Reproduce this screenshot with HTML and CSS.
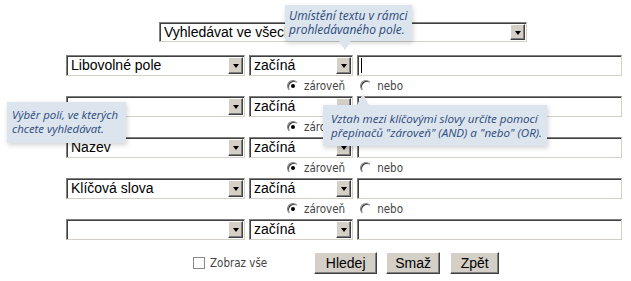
FILE: index.html
```html
<!DOCTYPE html>
<html lang="cs">
<head>
<meta charset="utf-8">
<link rel="stylesheet" href="styles.css">
</head>
<body>
<div class="page">
  <div class="top-row">
    <div class="sel wide"><span class="val">Vyhledávat ve všech</span><span class="btn"><i></i></span></div>
  </div>
  <div class="rows">
    <div class="row">
      <div class="sel field"><span class="val">Libovolné pole</span><span class="btn"><i></i></span></div>
      <div class="sel op"><span class="val">začíná</span><span class="btn"><i></i></span></div>
      <div class="inp"><span class="caret"></span></div>
    </div>
    <div class="conj">
      <span class="radio on"></span><span class="lbl">zároveň</span>
      <span class="radio"></span><span class="lbl">nebo</span>
    </div>
    <div class="row">
      <div class="sel field"><span class="val"></span><span class="btn"><i></i></span></div>
      <div class="sel op"><span class="val">začíná</span><span class="btn"><i></i></span></div>
      <div class="inp"></div>
    </div>
    <div class="conj">
      <span class="radio on"></span><span class="lbl">zároveň</span>
      <span class="radio"></span><span class="lbl">nebo</span>
    </div>
    <div class="row">
      <div class="sel field"><span class="val">Název</span><span class="btn"><i></i></span></div>
      <div class="sel op"><span class="val">začíná</span><span class="btn"><i></i></span></div>
      <div class="inp"></div>
    </div>
    <div class="conj">
      <span class="radio on"></span><span class="lbl">zároveň</span>
      <span class="radio"></span><span class="lbl">nebo</span>
    </div>
    <div class="row">
      <div class="sel field"><span class="val">Klíčová slova</span><span class="btn"><i></i></span></div>
      <div class="sel op"><span class="val">začíná</span><span class="btn"><i></i></span></div>
      <div class="inp"></div>
    </div>
    <div class="conj">
      <span class="radio on"></span><span class="lbl">zároveň</span>
      <span class="radio"></span><span class="lbl">nebo</span>
    </div>
    <div class="row">
      <div class="sel field"><span class="val"></span><span class="btn"><i></i></span></div>
      <div class="sel op"><span class="val">začíná</span><span class="btn"><i></i></span></div>
      <div class="inp"></div>
    </div>
  </div>
  <div class="actions">
    <label class="check"><span class="box"></span><span class="lbl">Zobraz vše</span></label>
    <span class="button b1">Hledej</span>
    <span class="button b2">Smaž</span>
    <span class="button b3">Zpět</span>
  </div>

  <div class="tip tip-top">Umístění textu v rámci<br>prohledávaného pole.<span class="arrow down"></span></div>
  <div class="tip tip-left">Výběr polí, ve kterých<br>chcete vyhledávat.</div>
  <div class="tip tip-right">Vztah mezi klíčovými slovy určíte pomocí<br>přepínačů "zároveň" (AND) a "nebo" (OR).<span class="arrow up"></span></div>
</div>
</body>
</html>
```
FILE: styles.css
```css
html, body { margin: 0; padding: 0; background: #fff; }
body { width: 631px; height: 281px; overflow: hidden; font-family: "Liberation Sans", Arial, sans-serif; }
.page { position: relative; padding-top: 22px; }

.top-row { padding-left: 159px; }
.sel {
  box-sizing: border-box; height: 20px; display: flex; align-items: stretch;
  border-top: 1px solid #808080; border-left: 1px solid #808080;
  border-right: 1px solid #d4d0c8; border-bottom: 1px solid #d4d0c8;
  box-shadow: inset 1px 1px 0 #404040; background: #fff;
}
.sel .val { flex: 1; font-size: 14px; line-height: 17px; padding: 1px 0 0 4px; color: #000; white-space: nowrap; overflow: hidden; }
.sel .btn {
  width: 15px; margin: 1px 1px 1px 0; box-sizing: border-box;
  background: #d4d0c8; border-top: 1px solid #fff; border-left: 1px solid #fff;
  border-right: 1px solid #404040; border-bottom: 1px solid #404040;
  box-shadow: inset -1px -1px 0 #808080; display: flex; align-items: center; justify-content: center;
}
.sel .btn i { width: 0; height: 0; border-left: 3.5px solid transparent; border-right: 3.5px solid transparent; border-top: 4px solid #000; margin-top: 1px; }
.wide { width: 368px; }

.rows { margin-top: 13px; padding-left: 66px; display: flex; flex-direction: column; }
.row { display: flex; gap: 4px; height: 21px; }
.row .sel { height: 21px; }
.field { width: 179px; }
.op { width: 104px; }
.inp {
  width: 265px; box-sizing: border-box; height: 21px;
  border-top: 1px solid #808080; border-left: 1px solid #808080;
  border-right: 1px solid #d4d0c8; border-bottom: 1px solid #d4d0c8;
  box-shadow: inset 1px 1px 0 #404040; position: relative;
}
.caret { position: absolute; left: 3px; top: 2px; width: 1px; height: 15px; background: #000; }

.conj { height: 20px; display: flex; align-items: center; padding-left: 221px; color: #444; }
.conj .lbl { margin-left: 5px; margin-right: 15px; font-family: "DejaVu Sans Condensed", "Liberation Sans Narrow", sans-serif; font-size: 11.5px; }
.radio {
  width: 12px; height: 12px; box-sizing: border-box; border-radius: 50%;
  border: 1px solid; border-color: #808080 #fff #fff #808080; background: #fff;
  box-shadow: inset 1px 1px 0 #404040; position: relative;
}
.radio.on::after { content: ""; position: absolute; left: 3px; top: 3px; width: 4px; height: 4px; border-radius: 50%; background: #000; }

.actions { display: flex; align-items: center; margin-top: 12px; padding-left: 193px; height: 22px; }
.check { display: flex; align-items: center; margin-right: 47px; }
.check .box { width: 12px; height: 12px; box-sizing: border-box; border: 1px solid #888; background: #fff; }
.check .lbl { margin-left: 5px; font-family: "DejaVu Sans Condensed", "Liberation Sans Narrow", sans-serif; font-size: 11.5px; color: #444; }
.button {
  box-sizing: border-box; height: 22px; background: #d4d0c8; font-size: 14px; line-height: 20px; text-align: center;
  border-top: 1px solid #fff; border-left: 1px solid #fff; border-right: 1px solid #404040; border-bottom: 1px solid #404040;
  box-shadow: inset -1px -1px 0 #808080;
}
.b1 { width: 63px; margin-right: 9px; }
.b2 { width: 54px; margin-right: 10px; }
.b3 { width: 49px; }

.tip {
  position: absolute; background: #dce4ee; color: #2b4a7a; font-family: "Open Sans", sans-serif; font-style: italic;
  font-size: 12px; line-height: 14px; box-shadow: 1px 2px 5px rgba(0,0,0,0.18);
  white-space: nowrap;
}
.tip-top { left: 285px; top: 5px; padding: 4px 4px 4px 4px; }
.tip-left { left: 7px; top: 102px; padding: 6px 8px 7px 5px; font-size: 11.4px; }
.tip-right { left: 323px; top: 105px; padding: 7px 5px 6px 8px; font-size: 11.6px; }
.arrow { position: absolute; width: 0; height: 0; border-left: 6px solid transparent; border-right: 6px solid transparent; }
.arrow.down { left: 54px; bottom: -9px; border-top: 9px solid #dce4ee; }
.arrow.up { left: 34px; top: -11px; border-bottom: 11px solid #dce4ee; }
```
